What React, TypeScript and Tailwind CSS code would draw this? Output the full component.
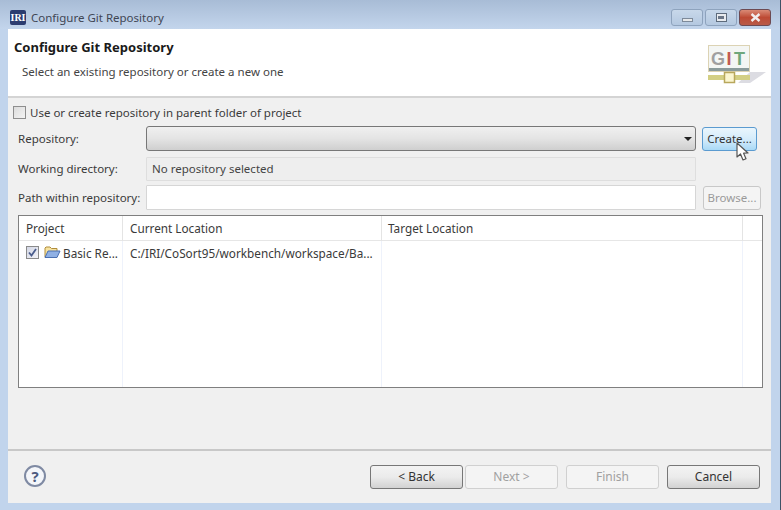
import React from 'react'

const font = { fontFamily: '"Noto Sans", "Open Sans", sans-serif' }

const GitLogo = () => (
  <svg width="60" height="42" viewBox="0 0 60 42">
    <polygon points="42,27 58,27 42,38 30,38" fill="#dcdce2" />
    <rect x="0.5" y="0.5" width="41" height="26" fill="#f4f6f4" stroke="#dcd3b4" />
    <rect x="1" y="23" width="40" height="3" fill="#8b9b9b" />
    <text x="3" y="20" fontSize="18" fontWeight="700" fontFamily="Liberation Sans" fill="#a0a0a0">G</text>
    <text x="18.5" y="20" fontSize="18" fontWeight="700" fontFamily="Liberation Sans" fill="#c25a50">I</text>
    <text x="26" y="20" fontSize="18" fontWeight="700" fontFamily="Liberation Sans" fill="#6fa77c">T</text>
    <rect x="0" y="30" width="42" height="5" fill="#d3cf84" />
    <rect x="16.5" y="27.5" width="10" height="10" fill="#fbf6d0" stroke="#b8a75c" strokeWidth="1.5" />
  </svg>
)

const Cursor = () => (
  <svg width="16" height="20" viewBox="0 0 16 20" className="absolute left-[736px] top-[142px]">
    <path d="M1 1 L1 15 L4.5 12 L7 18 L10 16.8 L7.6 11.2 L12 11 Z" fill="#fff" stroke="#555" strokeWidth="1.2" strokeLinejoin="round" />
  </svg>
)

const WinBtn = ({ kind }: { kind: 'min' | 'max' | 'close' }) => {
  if (kind === 'close') {
    return (
      <div className="w-[32px] h-[17px] rounded-[3px] border border-[#6d4a52] bg-gradient-to-b from-[#d98a76] via-[#bd4a34] to-[#b85a48] flex items-center justify-center">
        <svg width="11" height="9" viewBox="0 0 11 9">
          <path d="M1.5 1 L9.5 8 M9.5 1 L1.5 8" stroke="#f2eeee" strokeWidth="2.4" />
        </svg>
      </div>
    )
  }
  return (
    <div className="w-[32px] h-[17px] rounded-[3px] border border-[#8ea3bd] bg-gradient-to-b from-[#c8d8ea] to-[#b4c8e0] flex items-center justify-center">
      {kind === 'min' ? (
        <div className="w-[11px] h-[4px] mt-[5px] bg-[#e6e8ea] border border-[#7d8a9a]" />
      ) : (
        <div className="w-[11px] h-[9px] bg-[#e8ebef] border border-[#5d6b7c] flex items-center justify-center">
          <div className="w-[6px] h-[3px] bg-[#6a7687]" />
        </div>
      )}
    </div>
  )
}

const FootBtn = ({ label, off }: { label: string; off?: boolean }) => (
  <button
    type="button"
    className={
      off
        ? 'w-[93px] h-[24px] rounded-[3px] border border-[#d0d0d0] bg-[#f4f4f4] text-[12px] text-[#a0a0a0]'
        : 'w-[93px] h-[24px] rounded-[3px] border border-[#777] bg-gradient-to-b from-[#f3f3f3] via-[#ebebeb] to-[#d2d2d2] text-[12px] text-[#333]'
    }
  >
    {label}
  </button>
)

export default function App() {
  return (
    <div style={font} className="relative w-[781px] h-[510px] overflow-hidden bg-[#c1d4ec] border-r border-[#3f5266] text-[11.5px] text-[#3a3a3a] flex flex-col">
      {/* title bar */}
      <div className="h-[29px] shrink-0 bg-gradient-to-b from-[#a8bcd6] to-[#c3d5ec] flex items-center pt-[6px] pl-[10px] pr-[9px]">
        <div className="w-[16px] h-[15px] rounded-[2px] bg-[#2c3c70] text-white text-[10px] font-bold leading-[15px] text-center" style={{ fontFamily: 'Liberation Serif, serif' }}>
          IRI
        </div>
        <span className="ml-[5px] text-[11.5px] text-[#3f4654]">Configure Git Repository</span>
        <div className="ml-auto flex gap-[2px]">
          <WinBtn kind="min" />
          <WinBtn kind="max" />
          <WinBtn kind="close" />
        </div>
      </div>

      <div className="flex-1 ml-[8px] mr-[9px] mb-[7px] bg-[#f0f0f0] flex flex-col">
        {/* wizard header */}
        <div className="h-[69px] shrink-0 bg-white border-b-2 border-[#d4d4d4] relative pl-[6px]">
          <div className="pt-[9px] text-[13px] font-bold leading-[18px] text-[#1a1a1a]">Configure Git Repository</div>
          <div className="pt-[7px] pl-[8px] leading-[17px] text-[#444]">Select an existing repository or create a new one</div>
          <div className="absolute left-[700px] top-[16px]">
            <GitLogo />
          </div>
        </div>

        {/* form */}
        <div className="flex-1 px-[10px] pt-[6px] flex flex-col">
          <label className="flex items-center h-[17px] -ml-[5px] gap-[4px]">
            <span className="w-[13px] h-[13px] border border-[#8e8e8e] bg-gradient-to-br from-[#dcdcdc] to-[#f4f4f4]" />
            <span>Use or create repository in parent folder of project</span>
          </label>

          <div className="mt-[5px] grid grid-cols-[122px_550px_auto] gap-x-[6px] gap-y-[4px] items-center">
            <div>Repository:</div>
            <div className="h-[25px] rounded-[3px] border border-[#777] bg-gradient-to-b from-[#f0f0f0] via-[#e4e4e4] to-[#cfcfcf] flex items-center justify-end pr-[3px]">
              <div className="w-0 h-0 border-x-[4px] border-x-transparent border-t-[4px] border-t-[#222]" />
            </div>
            <button type="button" className="w-[55px] h-[24px] rounded-[3px] border border-[#5b9bd0] bg-gradient-to-b from-[#eaf6fd] via-[#d5ecfb] to-[#a9d9f6] text-[11.5px] text-[#333]">
              Create...
            </button>

            <div className="mt-[2px]">Working directory:</div>
            <div className="mt-[2px] h-[24px] rounded-[1px] border border-[#dedede] bg-[#eeeeee] flex items-center pl-[5px] text-[#444]">
              No repository selected
            </div>
            <div />

            <div className="whitespace-nowrap">Path within repository:</div>
            <div className="h-[25px] rounded-[1px] border border-[#d6d6d6] bg-white" />
            <button type="button" className="w-[58px] h-[24px] ml-[1px] rounded-[3px] border border-[#c8c8c8] bg-[#f4f4f4] text-[11.5px] text-[#9a9a9a]">
              Browse...
            </button>
          </div>

          {/* project table */}
          <div className="mt-[5px] w-[745px] h-[173px] border border-[#7f7f7f] bg-white flex flex-col text-[11.75px]">
            <div className="h-[25px] shrink-0 grid grid-cols-[104px_259px_361px_1fr] border-b border-[#e6e6e6]">
              <div className="pl-[7px] leading-[25px] border-r border-[#e4e4e4]">Project</div>
              <div className="pl-[7px] leading-[25px] border-r border-[#e4e4e4]">Current Location</div>
              <div className="pl-[6px] leading-[25px] border-r border-[#e4e4e4]">Target Location</div>
              <div />
            </div>
            <div className="flex-1 grid grid-cols-[104px_259px_361px_1fr]">
              <div className="border-r border-[#eef2fb] pl-[7px] pt-[3px] flex items-start gap-[6px]">
                <div className="relative w-[13px] h-[13px] mt-[2px] border border-[#8a8a8a] bg-gradient-to-br from-[#d4d8e6] to-[#f2f2f6]">
                  <svg width="11" height="11" viewBox="0 0 11 11" className="absolute left-0 top-0">
                    <path d="M2 5.5 L4.5 8.5 L9 2" fill="none" stroke="#4a5c8c" strokeWidth="1.8" />
                  </svg>
                </div>
                <svg width="17" height="14" viewBox="0 0 17 14" className="mt-[1px] -ml-[1px] shrink-0">
                  <path d="M1 12 V3 L2 2 H6 L7.5 3.5 H13 V6" fill="#f7e3a0" stroke="#b08d3c" />
                  <path d="M1 12.5 L4 6 H16 L13 12.5 Z" fill="#8fb0e4" stroke="#4a6fb0" />
                </svg>
                <span className="-ml-[4px] leading-[18px] whitespace-nowrap">Basic Re...</span>
              </div>
              <div className="border-r border-[#eef2fb] pl-[7px] pt-[3px] leading-[18px] whitespace-nowrap">
                C:/IRI/CoSort95/workbench/workspace/Ba...
              </div>
              <div className="border-r border-[#eef2fb]" />
              <div />
            </div>
          </div>
        </div>

        {/* footer */}
        <div className="h-[54px] shrink-0 border-t-2 border-[#c8c8c8] flex items-start pt-[14px] pl-[16px]">
          <div className="w-[22px] h-[22px] rounded-full border-2 border-[#7f8aa3] bg-[#f4f6fa] text-[#4e5b80] text-[15px] font-bold leading-[18px] text-center">
            ?
          </div>
          <div className="ml-[324px] flex">
            <FootBtn label="< Back" />
            <div className="ml-[2px]">
              <FootBtn label="Next >" off />
            </div>
            <div className="ml-[8px]">
              <FootBtn label="Finish" off />
            </div>
            <div className="ml-[8px]">
              <FootBtn label="Cancel" />
            </div>
          </div>
        </div>
      </div>

      <Cursor />
    </div>
  )
}
